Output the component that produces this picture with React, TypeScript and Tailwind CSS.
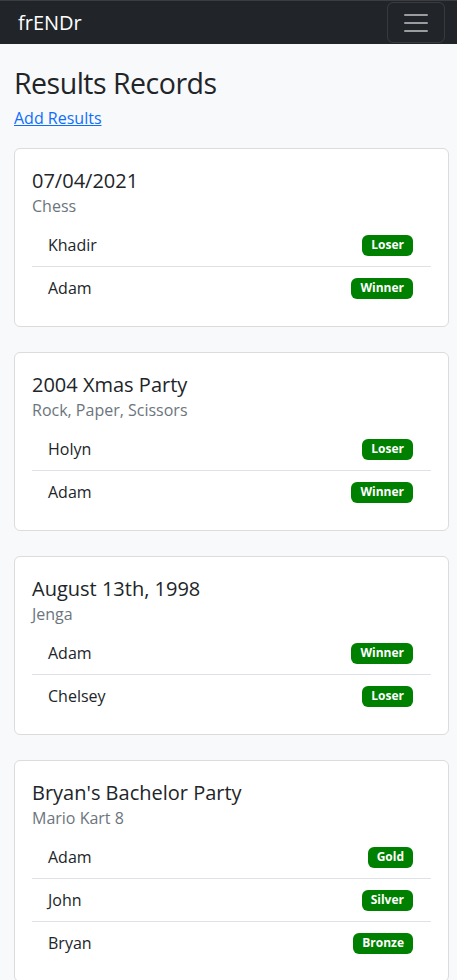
import React from 'react'

type Player = { name: string; result: string }
type Record = { title: string; game: string; players: Array<Player> }

const records: Array<Record> = [
  {
    title: '07/04/2021',
    game: 'Chess',
    players: [
      { name: 'Khadir', result: 'Loser' },
      { name: 'Adam', result: 'Winner' }
    ]
  },
  {
    title: '2004 Xmas Party',
    game: 'Rock, Paper, Scissors',
    players: [
      { name: 'Holyn', result: 'Loser' },
      { name: 'Adam', result: 'Winner' }
    ]
  },
  {
    title: 'August 13th, 1998',
    game: 'Jenga',
    players: [
      { name: 'Adam', result: 'Winner' },
      { name: 'Chelsey', result: 'Loser' }
    ]
  },
  {
    title: "Bryan's Bachelor Party",
    game: 'Mario Kart 8',
    players: [
      { name: 'Adam', result: 'Gold' },
      { name: 'John', result: 'Silver' },
      { name: 'Bryan', result: 'Bronze' }
    ]
  }
]

const Navbar = () => (
  <nav className="flex h-[44px] items-center justify-between border-t border-[#3b3d40] bg-[#212529] pl-[18px] pr-[12px]">
    <span className="text-[20px] leading-none text-white">frENDr</span>
    <button className="flex h-[41px] w-[58px] items-center justify-center rounded-[6px] border border-white/10">
      <svg width="30" height="30" viewBox="0 0 30 30">
        <path
          d="M4 7h22M4 15h22M4 23h22"
          stroke="rgba(255,255,255,0.55)"
          strokeWidth="2"
          strokeLinecap="round"
        />
      </svg>
    </button>
  </nav>
)

const ResultCard = ({ record }: { record: Record }) => (
  <div className="rounded-[6px] border border-[#dcdcdc] bg-white px-[17px] pt-[20px] pb-[17px]">
    <h5 className="text-[20px] leading-[1.2]">{record.title}</h5>
    <p className="mt-[1px] mb-[6px] leading-6 text-[#6c757d]">{record.game}</p>
    <ul>
      {record.players.map((p, i) => (
        <li
          key={i}
          className="flex items-center justify-between border-b border-[#dee2e6] py-[9px] pr-[18px] pl-4 leading-6 last:border-b-0"
        >
          <span>{p.name}</span>
          <span className="flex h-[21px] items-center rounded-[6px] bg-[#008000] px-[9px] text-[12px] leading-none font-bold text-white">
            {p.result}
          </span>
        </li>
      ))}
    </ul>
  </div>
)

export default function App() {
  return (
    <div
      className="min-h-screen bg-[#f8f9fa] text-[16px] text-[#212529]"
      style={{ fontFamily: '"Open Sans", sans-serif' }}
    >
      <Navbar />
      <main className="pt-[22px] pr-[8px] pl-[14px]">
        <h1 className="text-[28.5px] leading-[1.2] tracking-[-0.5px]">Results Records</h1>
        <a href="#" className="mt-[6px] inline-block leading-6 text-[#0d6efd] underline">
          Add Results
        </a>
        <div className="mt-[18px] flex flex-col gap-[25px]">
          {records.map((r, i) => (
            <ResultCard key={i} record={r} />
          ))}
        </div>
      </main>
    </div>
  )
}
